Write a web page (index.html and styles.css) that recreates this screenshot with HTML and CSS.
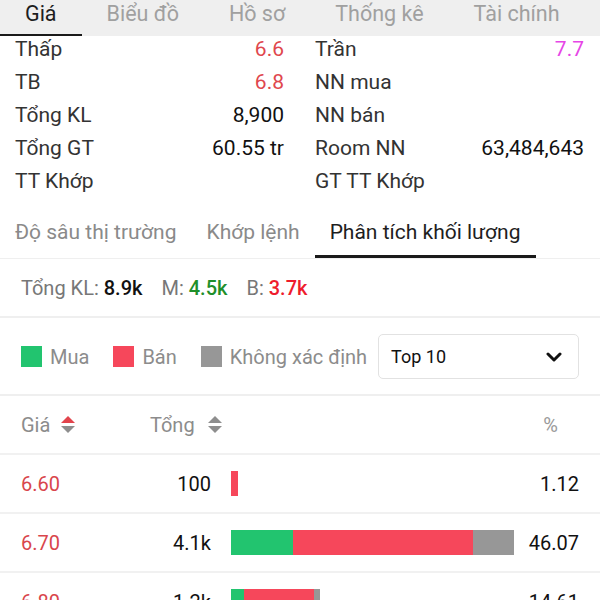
FILE: index.html
```html
<!DOCTYPE html>
<html lang="vi">
<head>
<meta charset="utf-8">
<link rel="stylesheet" href="styles.css">
</head>
<body>
<div class="tabs">
  <div class="tab active">Giá</div>
  <div class="tab">Biểu đồ</div>
  <div class="tab">Hồ sơ</div>
  <div class="tab">Thống kê</div>
  <div class="tab">Tài chính</div>
</div>

<div class="info">
  <div class="row"><span class="lbl">Thấp</span><span class="val red">6.6</span></div>
  <div class="row"><span class="lbl">Trần</span><span class="val magenta">7.7</span></div>
  <div class="row"><span class="lbl">TB</span><span class="val red">6.8</span></div>
  <div class="row"><span class="lbl">NN mua</span><span class="val"></span></div>
  <div class="row"><span class="lbl">Tổng KL</span><span class="val">8,900</span></div>
  <div class="row"><span class="lbl">NN bán</span><span class="val"></span></div>
  <div class="row"><span class="lbl">Tổng GT</span><span class="val">60.55 tr</span></div>
  <div class="row"><span class="lbl">Room NN</span><span class="val">63,484,643</span></div>
  <div class="row"><span class="lbl">TT Khớp</span><span class="val"></span></div>
  <div class="row"><span class="lbl">GT TT Khớp</span><span class="val"></span></div>
</div>

<div class="subtabs">
  <div class="subtab">Độ sâu thị trường</div>
  <div class="subtab">Khớp lệnh</div>
  <div class="subtab active">Phân tích khối lượng</div>
</div>

<div class="summary">
  <span class="s-lbl">Tổng KL:</span> <span class="s-val">8.9k</span>
  <span class="s-lbl gap">M:</span> <span class="s-val green">4.5k</span>
  <span class="s-lbl gap">B:</span> <span class="s-val sred">3.7k</span>
</div>

<div class="legend">
  <span class="sq sq-buy"></span><span class="lg-txt">Mua</span>
  <span class="sq sq-sell"></span><span class="lg-txt">Bán</span>
  <span class="sq sq-unk"></span><span class="lg-txt last">Không xác định</span>
  <div class="select">
    <span>Top 10</span>
    <svg class="chev" width="16" height="10" viewBox="0 0 16 10"><path d="M2 2 L8 8 L14 2" fill="none" stroke="#111" stroke-width="3" stroke-linecap="round" stroke-linejoin="round"/></svg>
  </div>
</div>

<div class="table">
  <div class="trow head">
    <div class="c-price">Giá
      <svg class="sort" width="16" height="20" viewBox="0 0 16 20"><path d="M8 1 L15 8 L1 8 Z" fill="#e2444c"/><path d="M1 11 L15 11 L8 18 Z" fill="#8e8e8e"/></svg>
    </div>
    <div class="c-total head-total">Tổng
      <svg class="sort" width="16" height="20" viewBox="0 0 16 20"><path d="M8 1 L15 8 L1 8 Z" fill="#8e8e8e"/><path d="M1 11 L15 11 L8 18 Z" fill="#8e8e8e"/></svg>
    </div>
    <div class="c-bar"></div>
    <div class="c-pct head-pct">%</div>
  </div>
  <div class="trow">
    <div class="c-price pr">6.60</div>
    <div class="c-total">100</div>
    <div class="c-bar"><div class="bar" style="width:7px"><i class="b-sell" style="width:100%"></i></div></div>
    <div class="c-pct">1.12</div>
  </div>
  <div class="trow">
    <div class="c-price pr">6.70</div>
    <div class="c-total">4.1k</div>
    <div class="c-bar"><div class="bar" style="width:283px"><i class="b-buy" style="width:62px"></i><i class="b-sell" style="width:180px"></i><i class="b-unk" style="width:41px"></i></div></div>
    <div class="c-pct">46.07</div>
  </div>
  <div class="trow">
    <div class="c-price pr">6.80</div>
    <div class="c-total">1.2k</div>
    <div class="c-bar"><div class="bar" style="width:89px"><i class="b-buy" style="width:13px"></i><i class="b-sell" style="width:70px"></i><i class="b-unk" style="width:6px"></i></div></div>
    <div class="c-pct">14.61</div>
  </div>
</div>
</body>
</html>
```

FILE: styles.css
```css
* { box-sizing: border-box; }
html, body { margin: 0; padding: 0; background: #fff; }
body {
  font-family: Roboto, "Noto Sans", "DejaVu Sans", sans-serif;
  color: #222;
  width: 600px;
  height: 600px;
  overflow: hidden;
}

.tabs {
  display: flex;
  height: 36px;
  background: #efefef;
}
.tab {
  padding: 0 25px;
  font-size: 21.5px;
  line-height: 28px;
  color: #a0a0a0;
  border-bottom: 2px solid transparent;
  height: 36px;
  white-space: nowrap;
}
.tab.active {
  color: #1e1e1e;
  border-bottom-color: #1a1a1a;
}

.info {
  display: grid;
  grid-template-columns: 269px 269px;
  column-gap: 31px;
  padding: 0 16px 0 15px;
}
.row {
  display: flex;
  justify-content: space-between;
  height: 33px;
  line-height: 26px;
  font-size: 21px;
}
.lbl { color: #333; }
.val { color: #111; }
.red { color: #e0474d; }
.magenta { color: #e645e6; }

.subtabs {
  display: flex;
  border-bottom: 1px solid #efefef;
}
.subtab {
  padding: 19px 15px 10px;
  font-size: 21px;
  line-height: 25px;
  color: #8a8a8a;
  border-bottom: 3px solid transparent;
}
.subtab.active {
  color: #1e1e1e;
  border-bottom-color: #1a1a1a;
}

.summary {
  padding: 16px 21px 0;
  height: 59px;
  font-size: 20px;
  line-height: 26px;
  border-bottom: 2px solid #efefef;
}
.s-lbl { color: #777; }
.s-lbl.gap { margin-left: 14px; }
.s-val { color: #111; font-weight: 500; }
.green { color: #1f8f2a; }
.sred { color: #ee1c2c; }

.legend {
  display: flex;
  align-items: center;
  padding: 16px 21px 15px;
  border-bottom: 2px solid #efefef;
}
.sq {
  width: 21px;
  height: 21px;
  flex: none;
  margin-right: 8px;
}
.sq-buy { background: #22c46f; }
.sq-sell { background: #f6475b; }
.sq-unk { background: #979797; }
.lg-txt {
  font-size: 20px;
  color: #8c8c8c;
  margin-right: 24px;
  white-space: nowrap;
}
.lg-txt.last { margin-right: 11px; }
.select {
  flex: 1;
  height: 45px;
  border: 1px solid #e2e2e2;
  border-radius: 5px;
  display: flex;
  align-items: center;
  justify-content: space-between;
  padding: 0 16px 0 12px;
  font-size: 18px;
  color: #111;
}
.chev { display: block; }

.trow {
  display: grid;
  grid-template-columns: 129px 61px 303px 65px;
  align-items: center;
  height: 59px;
  padding: 0 21px;
  border-bottom: 2px solid #f1f1f1;
  font-size: 20px;
}
.c-price { display: flex; align-items: center; color: #8c8c8c; }
.c-price.pr { color: #d9464c; }
.c-total { text-align: right; color: #111; white-space: nowrap; }
.head-total { text-align: left; display: flex; align-items: center; color: #8c8c8c; }
.c-bar { padding-left: 20px; }
.c-pct { text-align: right; color: #111; }
.head-pct { color: #9a9a9a; padding-right: 21px; }
.sort { margin-left: 10px; display: block; flex: none; }
.head-total .sort { margin-left: 12px; }

.bar {
  display: flex;
  height: 25px;
}
.bar i { display: block; height: 100%; }
.b-buy { background: #22c46f; }
.b-sell { background: #f6475b; }
.b-unk { background: #979797; }
```
